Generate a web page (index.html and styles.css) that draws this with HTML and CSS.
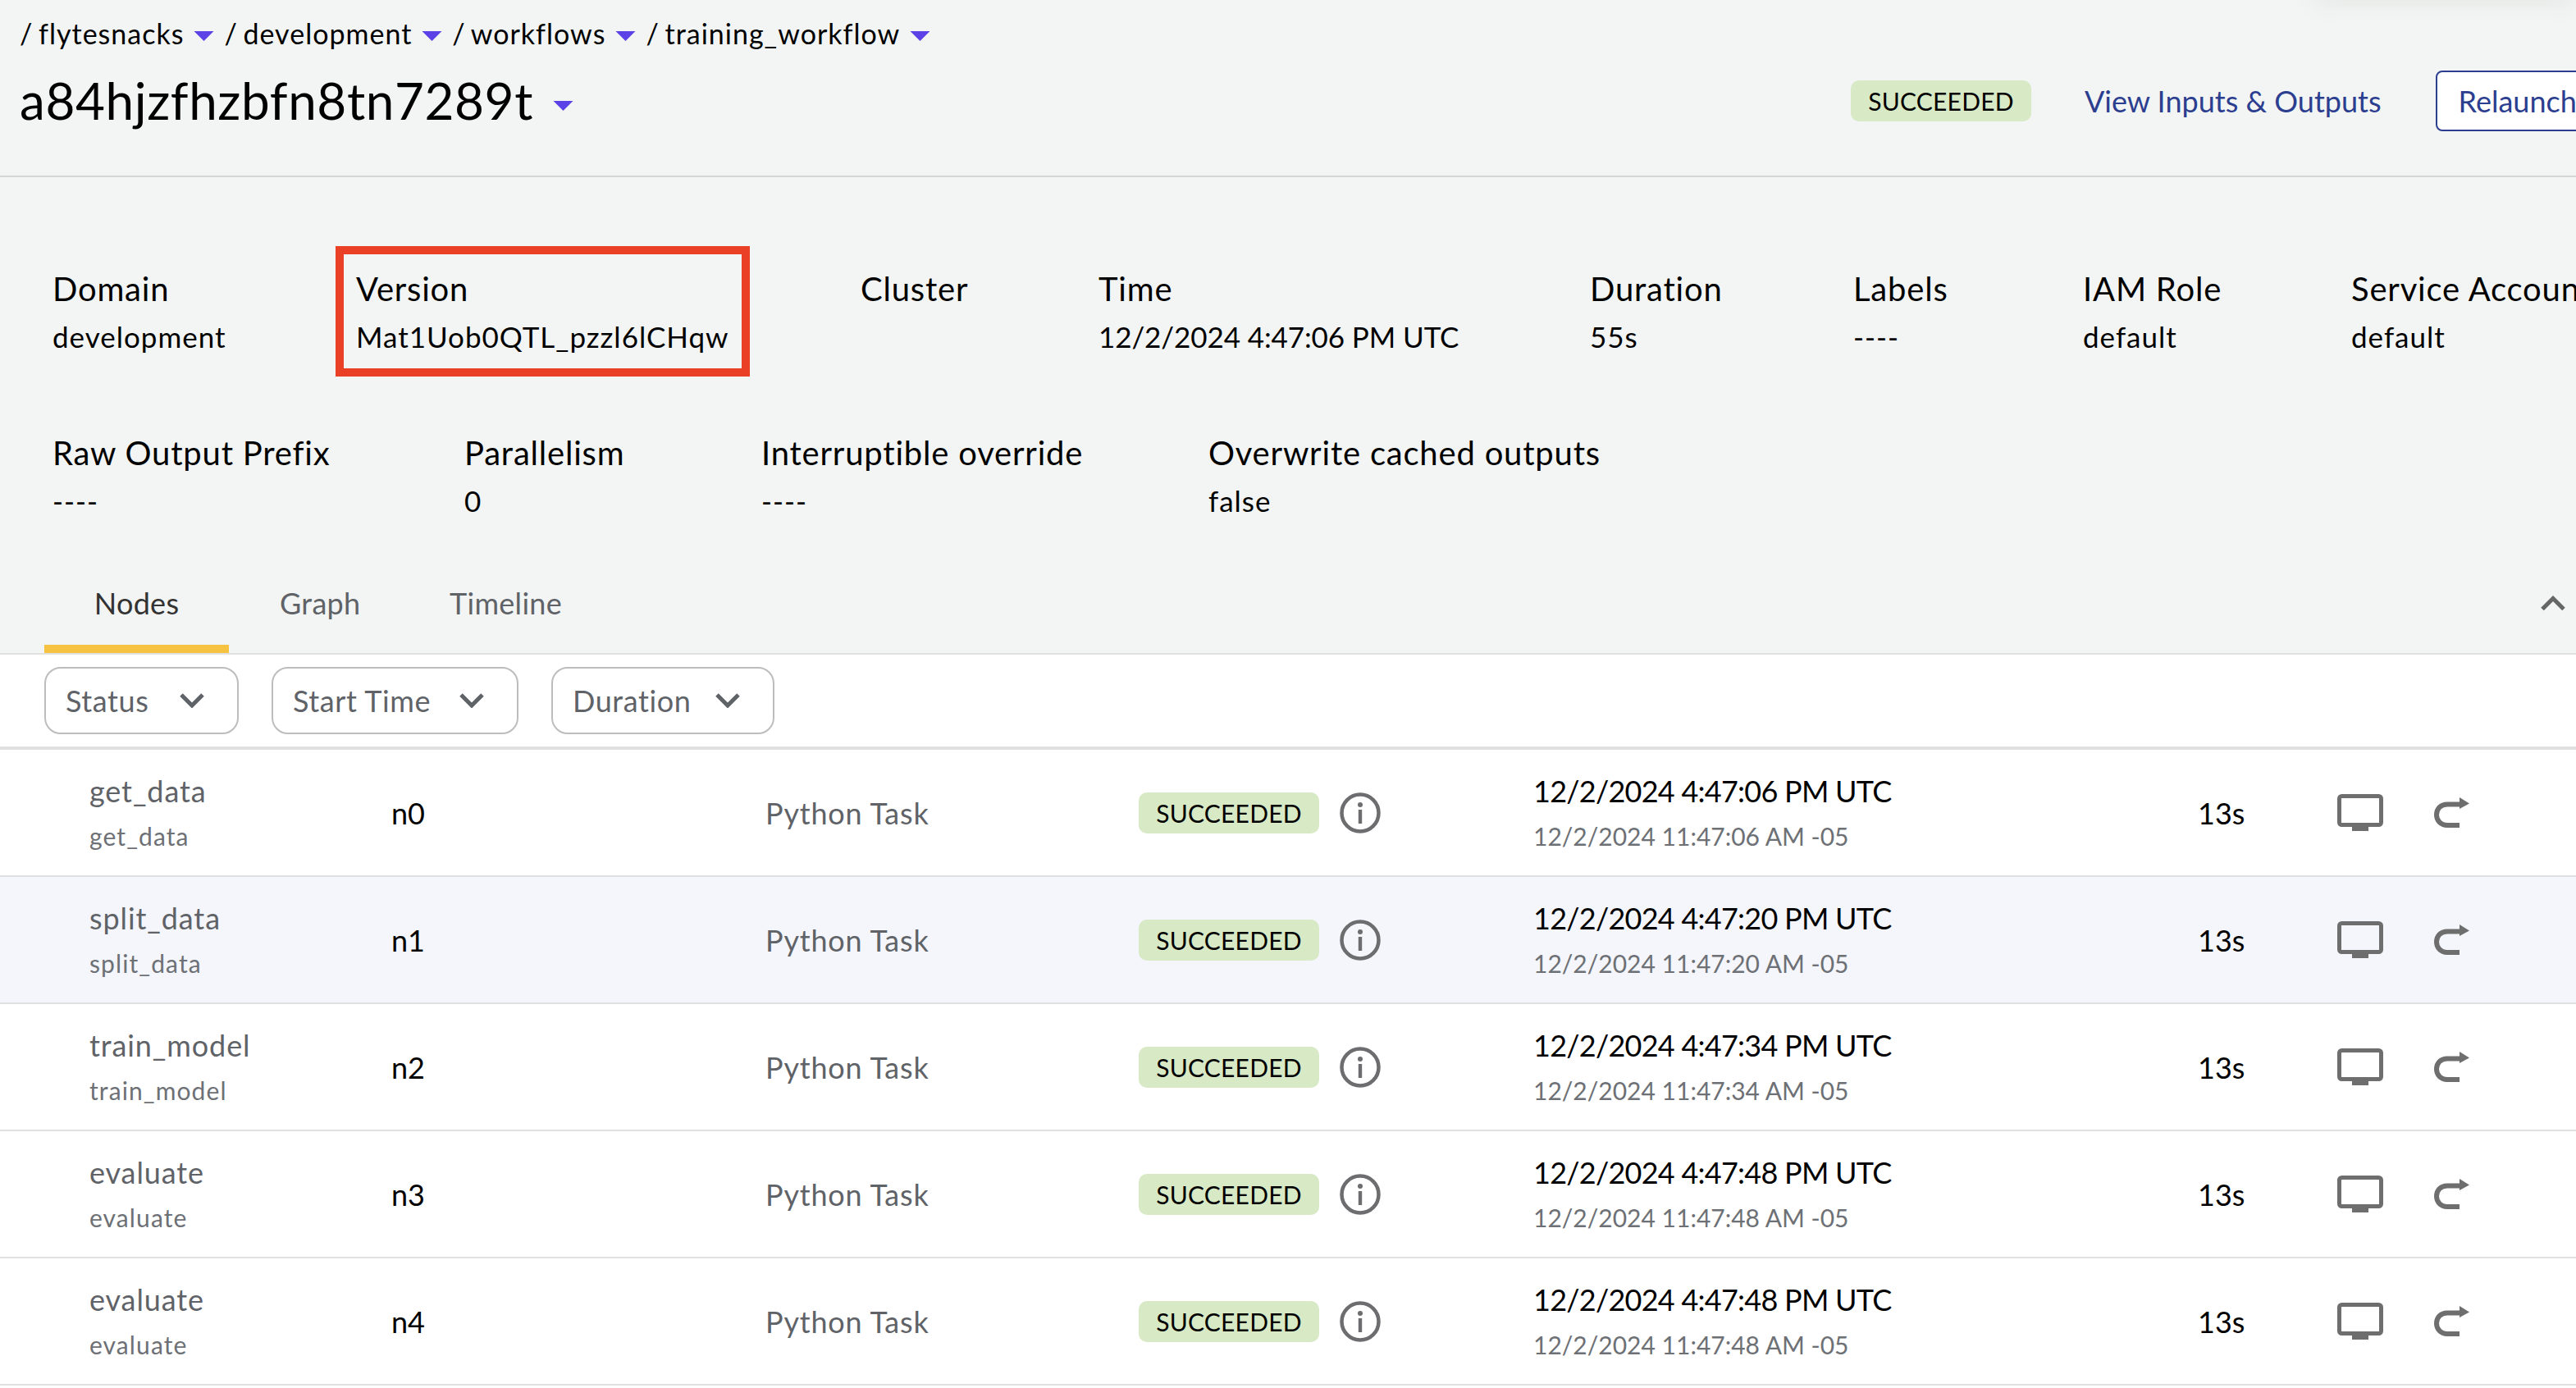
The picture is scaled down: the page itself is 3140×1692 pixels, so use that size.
FILE: index.html
```html
<!DOCTYPE html>
<html lang="en">
<head>
<meta charset="utf-8">
<title>Execution</title>
<link rel="stylesheet" href="styles.css">
</head>
<body>
<svg class="defs" width="0" height="0" aria-hidden="true">
  <symbol id="tri" viewBox="0 0 24 12"><path d="M0 0H24L12 12Z"/></symbol>
  <symbol id="chev" viewBox="0 0 30 18"><path d="M2 2L15 15L28 2" fill="none" stroke="currentColor" stroke-width="5"/></symbol>
  <symbol id="info" viewBox="0 0 50 50"><circle cx="25" cy="25" r="22.5" fill="none" stroke="currentColor" stroke-width="4.5"/><circle cx="25" cy="15" r="3" fill="currentColor"/><rect x="22.8" y="21" width="4.4" height="17" fill="currentColor"/></symbol>
  <symbol id="mon" viewBox="0 0 56 46"><rect x="2.500" y="2.500" width="51" height="35" rx="3" fill="none" stroke="currentColor" stroke-width="5"/><rect x="18" y="39" width="20" height="6" fill="currentColor"/></symbol>
  <symbol id="redo" viewBox="0 0 44 38"><path d="M31 34H16C8 34 3 28 3 21.250C3 14 8 8.500 16 8.500H32" fill="none" stroke="currentColor" stroke-width="6"/><path d="M31 0L43 7.500L31 14Z" fill="currentColor"/></symbol>
</svg>
<div class="page">
  <header class="topbar">
    <div class="heading">
      <nav class="crumbs">
        <span class="crumb">/ flytesnacks<svg class="tri"><use href="#tri"/></svg></span>
        <span class="crumb">/ development<svg class="tri"><use href="#tri"/></svg></span>
        <span class="crumb">/ workflows<svg class="tri"><use href="#tri"/></svg></span>
        <span class="crumb">/ training_workflow<svg class="tri"><use href="#tri"/></svg></span>
      </nav>
      <h1 class="title">a84hjzfhzbfn8tn7289t<svg class="tri"><use href="#tri"/></svg></h1>
    </div>
    <div class="actions">
      <span class="pill">SUCCEEDED</span>
      <a class="link">View Inputs &amp; Outputs</a>
      <button class="relaunch">Relaunch</button>
    </div>
  </header>

  <section class="details">
    <div class="detail-row first">
      <div class="item"><div class="label">Domain</div><div class="value">development</div></div>
      <div class="item boxed"><div class="label">Version</div><div class="value">Mat1Uob0QTL_pzzl6lCHqw</div></div>
      <div class="item"><div class="label">Cluster</div><div class="value"></div></div>
      <div class="item"><div class="label">Time</div><div class="value digits">12/2/2024 4:47:06 PM UTC</div></div>
      <div class="item"><div class="label">Duration</div><div class="value">55s</div></div>
      <div class="item"><div class="label">Labels</div><div class="value">----</div></div>
      <div class="item"><div class="label">IAM Role</div><div class="value">default</div></div>
      <div class="item"><div class="label">Service Account</div><div class="value">default</div></div>
    </div>
    <div class="detail-row second">
      <div class="item"><div class="label">Raw Output Prefix</div><div class="value">----</div></div>
      <div class="item"><div class="label">Parallelism</div><div class="value">0</div></div>
      <div class="item"><div class="label">Interruptible override</div><div class="value">----</div></div>
      <div class="item"><div class="label">Overwrite cached outputs</div><div class="value">false</div></div>
    </div>
  </section>

  <div class="tabs">
    <div class="tab active">Nodes</div>
    <div class="tab">Graph</div>
    <div class="tab">Timeline</div>
    <svg class="collapse"><use href="#chev"/></svg>
  </div>

  <div class="filters">
    <button class="filter f-status">Status<svg class="chev"><use href="#chev"/></svg></button>
    <button class="filter f-start">Start Time<svg class="chev"><use href="#chev"/></svg></button>
    <button class="filter f-duration">Duration<svg class="chev"><use href="#chev"/></svg></button>
  </div>

  <div class="rows">
    <div class="row">
      <div class="name"><div class="name-main">get_data</div><div class="name-sub">get_data</div></div>
      <div class="node-id">n0</div>
      <div class="type">Python Task</div>
      <div class="status"><span class="pill">SUCCEEDED</span><svg class="info"><use href="#info"/></svg></div>
      <div class="time"><div class="utc">12/2/2024 4:47:06 PM UTC</div><div class="local">12/2/2024 11:47:06 AM -05</div></div>
      <div class="dur">13s</div>
      <div class="row-actions"><svg class="mon"><use href="#mon"/></svg><svg class="redo"><use href="#redo"/></svg></div>
    </div>
    <div class="row alt">
      <div class="name"><div class="name-main">split_data</div><div class="name-sub">split_data</div></div>
      <div class="node-id">n1</div>
      <div class="type">Python Task</div>
      <div class="status"><span class="pill">SUCCEEDED</span><svg class="info"><use href="#info"/></svg></div>
      <div class="time"><div class="utc">12/2/2024 4:47:20 PM UTC</div><div class="local">12/2/2024 11:47:20 AM -05</div></div>
      <div class="dur">13s</div>
      <div class="row-actions"><svg class="mon"><use href="#mon"/></svg><svg class="redo"><use href="#redo"/></svg></div>
    </div>
    <div class="row">
      <div class="name"><div class="name-main">train_model</div><div class="name-sub">train_model</div></div>
      <div class="node-id">n2</div>
      <div class="type">Python Task</div>
      <div class="status"><span class="pill">SUCCEEDED</span><svg class="info"><use href="#info"/></svg></div>
      <div class="time"><div class="utc">12/2/2024 4:47:34 PM UTC</div><div class="local">12/2/2024 11:47:34 AM -05</div></div>
      <div class="dur">13s</div>
      <div class="row-actions"><svg class="mon"><use href="#mon"/></svg><svg class="redo"><use href="#redo"/></svg></div>
    </div>
    <div class="row">
      <div class="name"><div class="name-main">evaluate</div><div class="name-sub">evaluate</div></div>
      <div class="node-id">n3</div>
      <div class="type">Python Task</div>
      <div class="status"><span class="pill">SUCCEEDED</span><svg class="info"><use href="#info"/></svg></div>
      <div class="time"><div class="utc">12/2/2024 4:47:48 PM UTC</div><div class="local">12/2/2024 11:47:48 AM -05</div></div>
      <div class="dur">13s</div>
      <div class="row-actions"><svg class="mon"><use href="#mon"/></svg><svg class="redo"><use href="#redo"/></svg></div>
    </div>
    <div class="row">
      <div class="name"><div class="name-main">evaluate</div><div class="name-sub">evaluate</div></div>
      <div class="node-id">n4</div>
      <div class="type">Python Task</div>
      <div class="status"><span class="pill">SUCCEEDED</span><svg class="info"><use href="#info"/></svg></div>
      <div class="time"><div class="utc">12/2/2024 4:47:48 PM UTC</div><div class="local">12/2/2024 11:47:48 AM -05</div></div>
      <div class="dur">13s</div>
      <div class="row-actions"><svg class="mon"><use href="#mon"/></svg><svg class="redo"><use href="#redo"/></svg></div>
    </div>
  </div>
</div>
</body>
</html>
```
FILE: styles.css
```css
*, *::before, *::after { box-sizing: border-box; }
html, body { margin: 0; padding: 0; }
body { background: #fff; font-family: Lato, "Noto Sans", sans-serif; color: #000; overflow: hidden; }
.defs { position: absolute; }
.page { width: 3140px; height: 1692px; overflow: hidden; }

.topbar { height: 216px; background: #f3f5f4; border-bottom: 2px solid #d4d6d5; display: flex; justify-content: space-between; padding-left: 24px; position: relative; overflow: hidden; }
.topbar::after { content: ""; position: absolute; top: -20px; right: 0; width: 320px; height: 26px; background: #e6e8e7; filter: blur(12px); }
.crumbs { display: flex; gap: 12px; height: 80px; align-items: center; font-size: 34px; letter-spacing: 1px; word-spacing: -3px; }
.crumb { display: flex; align-items: center; white-space: nowrap; }
.tri { width: 25px; height: 12px; fill: #5b41e6; margin-left: 12px; margin-top: 8px; flex: none; }
.title { margin: 0; font-size: 62px; font-weight: 400; line-height: 84px; display: flex; align-items: center; letter-spacing: 0.6px; }
.title .tri { margin-left: 24px; margin-top: 14px; }
.actions { display: flex; align-items: center; height: 100%; padding: 86px 0 54px 0; width: 884px; flex: none; overflow: hidden; }
.pill { display: inline-flex; align-items: center; justify-content: center; width: 220px; height: 50px; border-radius: 10px; background: #d8e9c5; font-size: 30px; letter-spacing: 0.2px; flex: none; }
.link { color: #2c3e8f; font-size: 36px; margin-left: 65px; white-space: nowrap; }
.relaunch { margin-left: 66px; width: 300px; height: 74px; flex: none; text-align: left; padding: 0 26px; background: #fff; border: 2px solid #2c3e8f; border-radius: 8px; color: #2c3e8f; font: inherit; font-size: 36px; }

.details { height: 450px; background: #f3f5f4; }
.detail-row { display: grid; padding-left: 64px; white-space: nowrap; }
.first { grid-template-columns: 370px 615px 290px 599px 321px 280px 327px 275px; padding-top: 112px; height: 312px; }
.second { grid-template-columns: 502px 362px 545px 600px; }
.label { font-size: 40px; line-height: 48px; height: 48px; letter-spacing: 0.8px; }
.value { font-size: 35px; line-height: 44px; height: 44px; margin-top: 12px; letter-spacing: 1px; }
.value.digits { letter-spacing: -0.1px; }
.item.boxed { position: relative; }
.item.boxed::after { content: ""; position: absolute; left: -25px; top: -28px; width: 505px; height: 159px; border: 10px solid #ea4126; }

.tabs { display: flex; height: 132px; background: #f3f5f4; border-bottom: 2px solid #e0e0e0; padding-left: 54px; position: relative; color: #5f6368; }
.tab { font-size: 36px; height: 120px; padding-top: 44px; line-height: 50px; letter-spacing: 0.3px; }
.tab:nth-child(1) { width: 225px; text-align: center; color: #333; border-bottom: 10px solid #f5c242; height: 130px; }
.tab:nth-child(2) { margin-left: 62px; width: 207px; }
.collapse { position: absolute; right: 13px; top: 60px; width: 30px; height: 19px; transform: rotate(180deg); color: #666; }

.filters { display: flex; gap: 40px; height: 116px; padding: 15px 0 0 54px; border-bottom: 4px solid #e0e0e0; background: #fff; }
.filter { height: 82px; display: flex; align-items: center; justify-content: space-between; background: #fff; border: 2px solid #bdbdbd; border-radius: 20px; padding: 0 40px 0 24px; color: #5f6368; font: inherit; font-size: 36px; letter-spacing: 0.6px; }
.f-status { width: 237px; }
.f-start { width: 301px; }
.f-duration { width: 272px; }
.chev { width: 30px; height: 18px; flex: none; }

.row { display: grid; grid-template-columns: 368px 454px 457px 483px 809px 169px 1fr; align-items: center; height: 155px; padding-left: 109px; border-bottom: 2px solid #e0e0e0; background: #fff; white-space: nowrap; }
.row.alt { background: #f4f6fb; }
.name-main { font-size: 36px; line-height: 44px; margin-top: -2px; color: #5f6368; letter-spacing: 0.9px; }
.name-sub { font-size: 30px; line-height: 38px; margin-top: 14px; color: #6d7075; letter-spacing: 1.1px; }
.node-id, .dur { font-size: 36px; }
.dur { margin-left: -1px; }
.type { font-size: 36px; color: #5f6368; letter-spacing: 0.8px; padding-left: 2px; }
.status { display: flex; align-items: center; gap: 25px; }
.info { width: 50px; height: 50px; color: #6d6d70; }
.time { margin-left: -2px; }
.utc { font-size: 36px; line-height: 44px; margin-top: -2px; letter-spacing: -0.75px; }
.local { font-size: 30px; line-height: 38px; margin-top: 14px; color: #6d7075; }
.row-actions { display: flex; align-items: center; gap: 62px; color: #6e6e6e; }
.mon { width: 56px; height: 46px; }
.redo { width: 44px; height: 38px; }
```
